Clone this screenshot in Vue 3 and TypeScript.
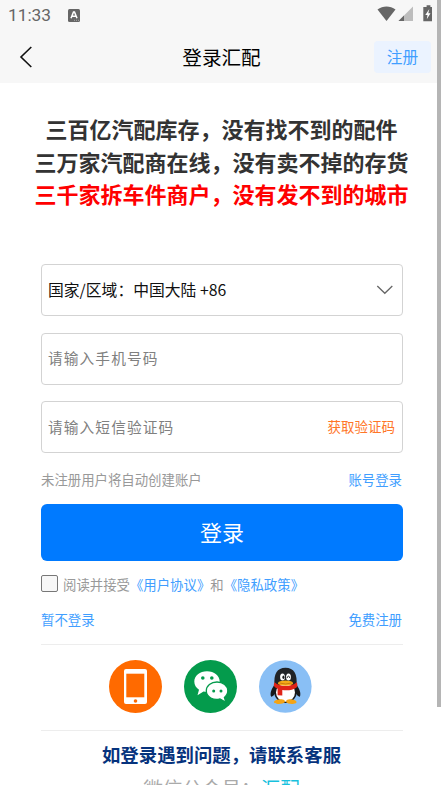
<script setup lang="ts">
import { ref } from 'vue'

const phone = ref<string>('')
const code = ref<string>('')
const accepted = ref<boolean>(false)
const slogans: { text: string; hot: boolean }[] = [
  { text: '三百亿汽配库存，没有找不到的配件', hot: false },
  { text: '三万家汽配商在线，没有卖不掉的存货', hot: false },
  { text: '三千家拆车件商户，没有发不到的城市', hot: true },
]
</script>

<template>
  <div class="screen">
    <header class="top">
      <div class="status">
        <span class="clock">11:33</span>
        <svg class="app-badge" width="12" height="13" viewBox="0 0 12 13">
          <rect width="12" height="13" rx="1.5" fill="#666" />
          <path d="M3 9.2 5.5 3h1L9 9.2M4.1 7.2h3.8" fill="none" stroke="#fff" stroke-width="1.5" />
          <path d="M6 11.3h5" stroke="#aaa" stroke-width="1" stroke-dasharray="1 1" />
        </svg>
        <svg class="signals" width="56" height="18" viewBox="0 0 56 18">
          <path d="M.5 4.4C5.8.4 13.2.4 18.500 4.400L9.500 16Z" fill="#666" />
          <path d="M36 1.500V16H21.500Z" fill="#bdbdbd" />
          <path d="M27 10.500V16H21.500Z" fill="#666" />
          <path d="M48 2h1.600V.3h3.800V2H55v14.200H46.300V2Z" fill="#666" />
          <path d="m52.300 4-4 5.900h2.200l-.7 4.400 3.700-6h-2.200Z" fill="#fff" />
        </svg>
      </div>
      <nav class="nav">
        <svg class="back" width="14" height="22" viewBox="0 0 14 22">
          <path d="M12.300 1 2 11l10.300 10" fill="none" stroke="#111" stroke-width="1.600" />
        </svg>
        <h1>登录汇配</h1>
        <button class="register">注册</button>
      </nav>
    </header>

    <main>
      <section class="slogans">
        <p v-for="line in slogans" :key="line.text" :class="{ hot: line.hot }">{{ line.text }}</p>
      </section>

      <form class="form" @submit.prevent>
        <div class="field region">
          <span>国家/区域：中国大陆 +86</span>
          <svg width="18" height="10" viewBox="0 0 18 10">
            <path d="m1.300 1 7.500 7.300L16.300 1" fill="none" stroke="#666" stroke-width="1.300" />
          </svg>
        </div>
        <div class="field"><input v-model="phone" placeholder="请输入手机号码" /></div>
        <div class="field">
          <input v-model="code" placeholder="请输入短信验证码" />
          <a class="get-code">获取验证码</a>
        </div>
        <div class="row hint"><span>未注册用户将自动创建账户</span><a>账号登录</a></div>
        <button class="submit">登录</button>
        <label class="agree">
          <input v-model="accepted" type="checkbox" />
          <span>阅读并接受<a>《用户协议》</a>和<a>《隐私政策》</a></span>
        </label>
        <div class="row skip"><a>暂不登录</a><a>免费注册</a></div>
      </form>

      <section class="providers">
        <svg width="53" height="53" viewBox="0 0 53 53">
          <circle cx="26.500" cy="26.500" r="26.500" fill="#ff6a00" />
          <rect x="15" y="9" width="23" height="35" rx="2" fill="#fff" />
          <rect x="17.300" y="13.700" width="18" height="23.600" fill="#ff6a00" />
          <circle cx="26.500" cy="41" r="1.800" fill="#ff6a00" />
        </svg>
        <svg width="53" height="53" viewBox="0 0 53 53">
          <circle cx="26.500" cy="26.500" r="26.500" fill="#049b4c" />
          <path d="M23 11.200c-7.200 0-12.700 4.600-12.700 10.400 0 3.400 1.800 6.300 4.700 8.200l-1.500 5.500 6-3.800c6.400 1.600 16.200-1.300 16.200-9.900 0-5.800-5.500-10.400-12.700-10.400Z" fill="#fff" />
          <path d="M33 22c-6 0-10.700 3.900-10.700 8.800 0 6.500 7.400 9.900 13.700 8.100l5.900 3.400-1.500-4.900c2.200-1.700 3.400-4 3.400-6.600C43.800 25.900 39 22 33 22Z" fill="#fff" stroke="#049b4c" stroke-width="1.300" />
          <g fill="#049b4c"><circle cx="18.800" cy="18" r="1.800" /><circle cx="27.800" cy="18" r="1.800" /><circle cx="29.700" cy="31" r="1.500" /><circle cx="37" cy="31" r="1.500" /></g>
        </svg>
        <svg width="53" height="53" viewBox="0 0 53 53">
          <circle cx="26.300" cy="26.500" r="26.300" fill="#89bff5" />
          <path d="M16 24c-3 4-5.500 9-3.900 12.700 1.700.2 3.200-2 4.200-3.700M37 24c3 4 5.500 9 3.900 12.700-1.700.2-3.200-2-4.200-3.700" fill="#17191b" />
          <ellipse cx="26.500" cy="31" rx="11.500" ry="12" fill="#17191b" />
          <path d="M15.500 25c-1-11 2.500-17.300 11-17.300S38.500 14 37.500 25Z" fill="#202326" />
          <ellipse cx="26.500" cy="32.500" rx="9.500" ry="9.200" fill="#fff" />
          <path d="M25.500 40.300c-3-2.100-9.800-.8-10.500 1.500-.7 2.800 9.200 2.900 11 .3ZM27.500 40.300c3-2.100 9.300-.8 10 1.500.7 2.800-8.700 2.900-10.500.3Z" fill="#f5a414" />
          <path d="M15.500 22.200c5.500 5 16.500 5 22.300 0 .8 2.100.8 4-.2 5.300-3.800 2.800-9.600 3.200-14.300 2.500v5.600l-4.700-.4v-6.500c-3.800-1.800-4.500-3-3.100-6.500Z" fill="#df2418" />
          <g fill="#fff"><ellipse cx="23.500" cy="17" rx="2.400" ry="3.600" /><ellipse cx="29.500" cy="17" rx="2.400" ry="3.600" /></g>
          <ellipse cx="24.400" cy="17.200" rx="1" ry="1.700" fill="#17191b" />
          <path d="M28.300 18c.2-2.600 2.100-2.600 2.300 0" fill="none" stroke="#17191b" stroke-width=".9" />
          <ellipse cx="26.500" cy="23.200" rx="7.500" ry="2.600" fill="#f5ab17" />
          <path d="M20.500 23q6 2 12 0" fill="none" stroke="#a95c0a" stroke-width=".6" />
        </svg>
      </section>

      <section class="help">
        <h2>如登录遇到问题，请联系客服</h2>
        <p>微信公众号：<b>汇配</b></p>
      </section>
    </main>
    <div class="scrollbar"></div>
  </div>
</template>

<style>
body { margin: 0; overflow: hidden; }
</style>

<style scoped>
.screen { position: relative; box-sizing: border-box; width: 441px; height: 785px; overflow: hidden; background: #fff; color: #111; font-family: "Noto Sans CJK SC", sans-serif; }
.screen * { box-sizing: border-box; }
h1, h2, p { margin: 0; }
button, input { font-family: inherit; border: 0; outline: 0; }
a { color: #409eff; }
.top { height: 83px; background: #f7f7f7; }
.status { display: flex; align-items: center; height: 30px; padding: 0 8px 0 8px; }
.clock { width: 60px; color: #666; font: 400 17.300px/30px Roboto, sans-serif; }
.signals { margin-left: auto; margin-top: -2px; }
.nav { display: grid; grid-template-columns: 68px 1fr 68px; align-items: center; height: 53px; }
.back { margin-left: 19px; }
h1 { padding-left: 2px; text-align: center; font-size: 19.600px; line-height: 30px; font-weight: 400; color: #000; }
.register { width: 57px; height: 32px; margin-left: 1px; padding: 0; border-radius: 4px; background: #ebf3ff; color: #409eff; font-size: 15.700px; line-height: 32px; }
.slogans { padding-top: 29px; height: 181px; text-align: center; }
.slogans p { padding-left: 2px; font-size: 22px; line-height: 32.600px; font-weight: 700; color: #333; white-space: nowrap; }
.slogans .hot { color: #f00; }
.form { display: flex; flex-direction: column; width: 362px; margin-left: 41px; }
.field { display: flex; align-items: center; height: 52px; margin-bottom: 16.600px; padding: 0 7px 2px 6px; border: 1px solid #d3d3d3; border-radius: 4px; }
.region { justify-content: space-between; padding-right: 8px; font-size: 15.800px; color: #111; }
.region svg { margin-top: 2px; }
.field input { flex: 1; min-width: 0; width: 100%; padding: 0; background: transparent; font-size: 14.700px; letter-spacing: 1.100px; }
.field input::placeholder { color: #808080; opacity: 1; }
.get-code { color: #ff7628; font-size: 13.500px; }
.row { display: flex; justify-content: space-between; width: 361px; font-size: 13.400px; line-height: 20px; }
.hint { margin-top: -1px; color: #999; }
.submit { height: 57px; margin-top: 15px; padding: 0 0 2px; border-radius: 6px; background: #007aff; color: #fff; font-size: 22px; }
.agree { display: flex; align-items: center; height: 20px; margin-top: 13px; font-size: 13.400px; color: #999; }
.agree input { appearance: none; width: 17px; height: 17px; margin: 0 5px 0 0; border: 1px solid #777; border-radius: 2px; background: #f7f7f7; }
.skip { margin-top: 15px; }
.providers { display: flex; align-items: center; gap: 22px; width: 362px; height: 87px; margin: 15px 0 0 41px; padding: 0 0 2px 68px; border: solid #ededed; border-width: 1px 0; }
.help { padding-left: 2px; text-align: center; }
h2 { padding-top: 8px; font-size: 18.400px; line-height: 30px; color: #06337d; }
.help p { font-size: 19.600px; line-height: 30px; margin-top: 4px; color: #aaa; }
.help b { font-weight: 400; color: #18c1dd; }
.scrollbar { position: absolute; top: 0; right: 0; width: 4px; height: 707px; background: #b5b5b5; }
</style>
